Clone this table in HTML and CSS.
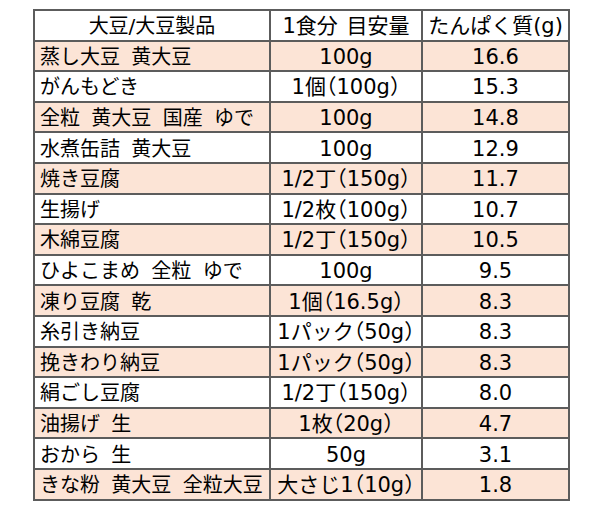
FILE: index.html
```html
<!DOCTYPE html>
<html lang="ja">
<head>
<meta charset="utf-8">
<link rel="stylesheet" href="styles.css">
</head>
<body>
<table class="protein">
  <colgroup>
    <col class="c-name">
    <col class="c-amount">
    <col class="c-value">
  </colgroup>
  <thead>
    <tr><th class="name">大豆/大豆製品</th><th class="amount">1食分 目安量</th><th class="value">たんぱく質(g)</th></tr>
  </thead>
  <tbody>
    <tr class="hl"><td class="name">蒸し大豆 黄大豆</td><td class="amount">100g</td><td class="value">16.6</td></tr>
    <tr><td class="name">がんもどき</td><td class="amount">1個（100g）</td><td class="value">15.3</td></tr>
    <tr class="hl"><td class="name">全粒 黄大豆 国産 ゆで</td><td class="amount">100g</td><td class="value">14.8</td></tr>
    <tr><td class="name">水煮缶詰 黄大豆</td><td class="amount">100g</td><td class="value">12.9</td></tr>
    <tr class="hl"><td class="name">焼き豆腐</td><td class="amount">1/2丁（150g）</td><td class="value">11.7</td></tr>
    <tr><td class="name">生揚げ</td><td class="amount">1/2枚（100g）</td><td class="value">10.7</td></tr>
    <tr class="hl"><td class="name">木綿豆腐</td><td class="amount">1/2丁（150g）</td><td class="value">10.5</td></tr>
    <tr><td class="name">ひよこまめ 全粒 ゆで</td><td class="amount">100g</td><td class="value">9.5</td></tr>
    <tr class="hl"><td class="name">凍り豆腐 乾</td><td class="amount">1個（16.5g）</td><td class="value">8.3</td></tr>
    <tr><td class="name">糸引き納豆</td><td class="amount">1パック（50g）</td><td class="value">8.3</td></tr>
    <tr class="hl"><td class="name">挽きわり納豆</td><td class="amount">1パック（50g）</td><td class="value">8.3</td></tr>
    <tr><td class="name">絹ごし豆腐</td><td class="amount">1/2丁（150g）</td><td class="value">8.0</td></tr>
    <tr class="hl"><td class="name">油揚げ 生</td><td class="amount">1枚（20g）</td><td class="value">4.7</td></tr>
    <tr><td class="name">おから 生</td><td class="amount">50g</td><td class="value">3.1</td></tr>
    <tr class="hl"><td class="name">きな粉 黄大豆 全粒大豆</td><td class="amount">大さじ1（10g）</td><td class="value">1.8</td></tr>
  </tbody>
</table>
</body>
</html>
```

FILE: styles.css
```css
html, body {
  margin: 0;
  padding: 0;
  background: #ffffff;
}

body {
  padding: 9px 0 0 33px;
}

.protein {
  border-collapse: collapse;
  table-layout: fixed;
  width: 535px;
  font-family: "DejaVu Sans", "Noto Sans CJK JP", sans-serif;
  font-size: 20px;
  color: #000000;
  font-feature-settings: "halt" 1;
}

.c-name { width: 236px; }
.c-amount { width: 152px; }
.c-value { width: 147px; }

.protein th,
.protein td {
  border: 2px solid #5c5c5c;
  height: 30.6px;
  padding: 2px 2px 0;
  box-sizing: border-box;
  text-align: center;
  font-weight: normal;
  line-height: 26px;
  white-space: nowrap;
  overflow: hidden;
}

.protein .name {
  word-spacing: 5px;
}

.protein td.name {
  text-align: left;
  padding-left: 5px;
}

.protein .amount,
.protein .value {
  font-size: 21px;
  word-spacing: 2px;
}

.protein th.name {
  text-align: center;
}

.protein tr.hl td {
  background: #fce4d6;
}
```
